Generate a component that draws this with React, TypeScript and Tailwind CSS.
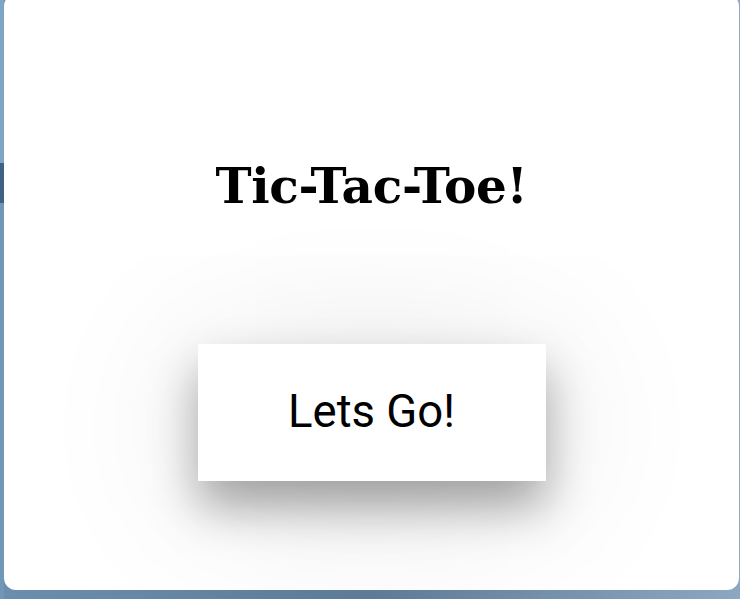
export default function App() {
  return (
    <div className="h-[599px] w-[740px] overflow-hidden bg-[linear-gradient(90deg,#6b8eae_0%,#5f7d99_50%,#8ba7c2_100%)]">
      <div className="flex h-full">
        <div className="flex w-[4px] flex-col">
          <div className="h-[163px] bg-[#7ea5c3]" />
          <div className="h-[40px] bg-[#3f6184]" />
          <div className="flex-1 bg-[#7196b6]" />
        </div>
        <div className="-mt-[6px] flex h-[596px] flex-1 flex-col items-center rounded-xl bg-white">
          <h1 className="mt-[152px] text-[48.5px] font-bold leading-[80px] tracking-[-0.3px] text-black [font-family:'DejaVu_Serif',serif]">
            Tic-Tac-Toe!
          </h1>
          <button className="mt-[118px] flex h-[137px] w-[348px] items-center justify-center bg-white text-[45.5px] text-black shadow-[0_26px_48px_rgba(0,0,0,0.34),0_14px_170px_rgba(0,0,0,0.12)] [font-family:Roboto,sans-serif]">
            Lets Go!
          </button>
        </div>
        <div className="w-[1px]" />
      </div>
    </div>
  );
}
